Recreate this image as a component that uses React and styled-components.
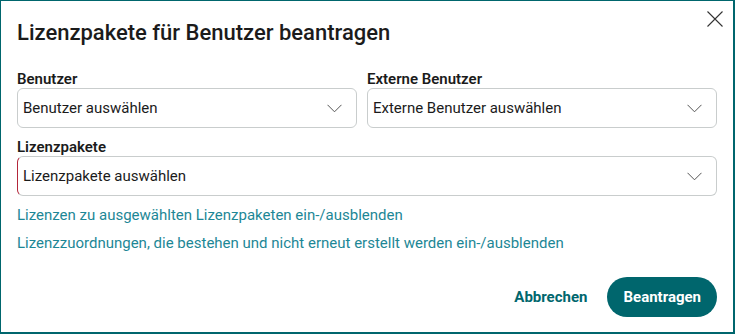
import React from 'react';
import styled, { createGlobalStyle } from 'styled-components';

const GlobalStyle = createGlobalStyle`
  html, body {
    margin: 0;
    padding: 0;
    background: #ffffff;
  }
  body {
    font-family: Roboto, "Liberation Sans", sans-serif;
    color: #1b1b1b;
  }
`;

const Dialog = styled.div`
  position: relative;
  box-sizing: border-box;
  width: 735px;
  height: 334px;
  background: #ffffff;
  border-style: solid;
  border-color: #00666d;
  border-width: 1px 2px 2px 1px;
  padding: 17px 16px 0 16px;
  display: flex;
  flex-direction: column;
`;

const CloseButton = styled.button`
  position: absolute;
  top: 9px;
  right: 9px;
  width: 18px;
  height: 18px;
  padding: 0;
  border: none;
  background: none;
  cursor: pointer;
`;

const Title = styled.h2`
  margin: 0;
  font-size: 22px;
  line-height: 30px;
  font-weight: 500;
  color: #1b1b1b;
`;

const Row = styled.div`
  display: grid;
  grid-template-columns: 340px 1fr;
  column-gap: 10px;
  margin-top: ${p => p.$top || 0}px;
`;

const Field = styled.div`
  display: flex;
  flex-direction: column;
  margin-top: ${p => p.$top || 0}px;
`;

const Label = styled.label`
  font-size: 15px;
  line-height: 18px;
  font-weight: 600;
  color: #1b1b1b;
`;

const Select = styled.div`
  box-sizing: border-box;
  height: 40px;
  display: flex;
  align-items: center;
  justify-content: space-between;
  padding: 0 14px 0 5px;
  border: 1px solid #c9cdcd;
  border-left-color: ${p => (p.$invalid ? '#b3263a' : '#c9cdcd')};
  border-radius: 6px;
  font-size: 15px;
  color: #1b1b1b;
  background: #fff;
`;

const Chevron = () => (
  <svg width="15" height="9" viewBox="0 0 15 9" fill="none">
    <path d="M0.5 0.8 L7.5 7.8 L14.5 0.8" stroke="#555" strokeWidth="1" />
  </svg>
);

const Links = styled.div`
  display: flex;
  flex-direction: column;
  gap: 10px;
  margin-top: 10px;
`;

const LinkText = styled.a`
  font-size: 15px;
  line-height: 18px;
  color: #1d8796;
  text-decoration: none;
  cursor: pointer;
`;

const Footer = styled.div`
  display: flex;
  justify-content: flex-end;
  align-items: center;
  gap: 20px;
  margin-top: auto;
  margin-bottom: 15px;
`;

const TextButton = styled.button`
  border: none;
  background: none;
  padding: 0;
  font-family: inherit;
  font-size: 15px;
  font-weight: 700;
  color: #00666d;
  cursor: pointer;
`;

const PrimaryButton = styled.button`
  height: 40px;
  padding: 0 16px;
  border: none;
  border-radius: 20px;
  background: #00666d;
  color: #ffffff;
  font-family: inherit;
  font-size: 15px;
  font-weight: 700;
  cursor: pointer;
`;

export default function App() {
  return (
    <>
      <GlobalStyle />
      <Dialog>
        <CloseButton aria-label="Schließen">
          <svg width="18" height="18" viewBox="0 0 18 18">
            <path d="M1.5 1.5 L16.5 16.5 M16.5 1.5 L1.5 16.5" stroke="#333" strokeWidth="1.1" />
          </svg>
        </CloseButton>
        <Title>Lizenzpakete für Benutzer beantragen</Title>
        <Row $top={22}>
          <Field>
            <Label>Benutzer</Label>
            <Select>
              <span>Benutzer auswählen</span>
              <Chevron />
            </Select>
          </Field>
          <Field>
            <Label>Externe Benutzer</Label>
            <Select>
              <span>Externe Benutzer auswählen</span>
              <Chevron />
            </Select>
          </Field>
        </Row>
        <Field $top={10}>
          <Label>Lizenzpakete</Label>
          <Select $invalid>
            <span>Lizenzpakete auswählen</span>
            <Chevron />
          </Select>
        </Field>
        <Links>
          <LinkText>Lizenzen zu ausgewählten Lizenzpaketen ein-/ausblenden</LinkText>
          <LinkText>Lizenzzuordnungen, die bestehen und nicht erneut erstellt werden ein-/ausblenden</LinkText>
        </Links>
        <Footer>
          <TextButton>Abbrechen</TextButton>
          <PrimaryButton>Beantragen</PrimaryButton>
        </Footer>
      </Dialog>
    </>
  );
}
